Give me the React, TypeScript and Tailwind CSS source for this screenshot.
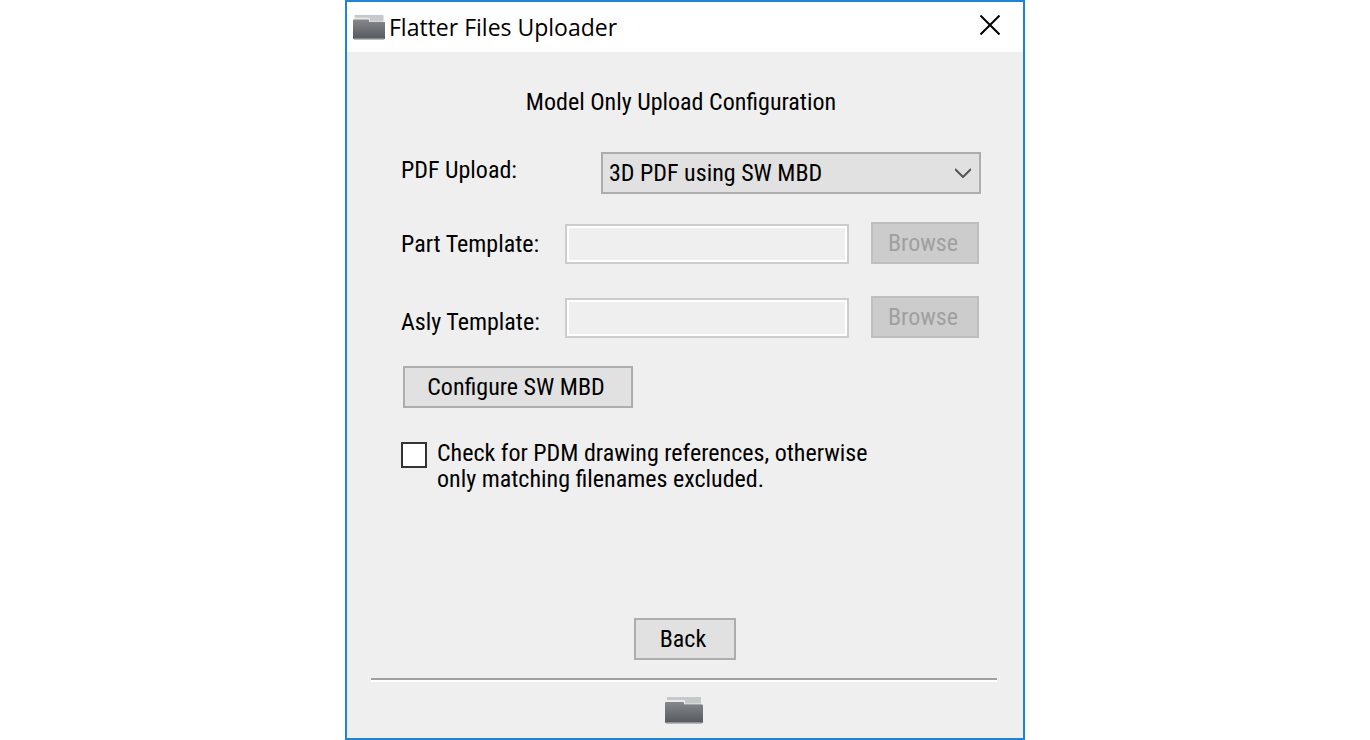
import { useId } from "react";

const FolderIcon = ({ className }: { className?: string }) => {
  const id = useId();

  return (
    <svg viewBox="0 0 38 28" preserveAspectRatio="none" className={className} aria-hidden="true">
      <defs>
        <linearGradient id={id} x1="0" y1="0" x2="0" y2="1">
          <stop offset="0" stopColor="#85898d" />
          <stop offset="1" stopColor="#55595e" />
        </linearGradient>
      </defs>
      <path d="M2 1h34v8H2z" fill="#c6c8c9" />
      <path d="M2 4h18v2h16v2H2z" fill="#e9eaea" />
      <path d="M20 2.5h16v5H20z" fill="#c6c8c9" />
      <path d="M1 6h17q1 0 1 1v1.5h18q1 0 1 1V26q0 1-1 1H1q-1 0-1-1V7q0-1 1-1z" fill={`url(#${id})`} />
      <path d="M1 27h36" stroke="#a3a5a8" strokeWidth="1.5" />
    </svg>
  );
};

const templates = [
  { id: "part-template", label: "Part Template:" },
  { id: "asly-template", label: "Asly Template:" },
];

const App = () => {
  return (
    <main className="flex min-h-screen justify-center bg-white">
      <section className="flex w-full max-w-170 flex-col border-2 border-[#1f83d6] bg-[#efefef] font-['Roboto_Condensed','Liberation_Sans',sans-serif] text-[24px] leading-[26px] text-black">
        <header className="flex h-12.5 items-center bg-white pr-5 pl-1.5">
          <FolderIcon className="h-6.5 w-8" />
          <h1 className="ml-1 flex-1 font-['Open_Sans',sans-serif] text-[23px] leading-8">Flatter Files Uploader</h1>
          <button type="button" aria-label="Close" className="mb-1 flex size-6.5 items-center justify-center">
            <svg viewBox="0 0 20 20" className="size-5" fill="none" stroke="#000" strokeWidth="2" aria-hidden="true">
              <path d="M0.5 0.5l19 19M19.5 0.5l-19 19" />
            </svg>
          </button>
        </header>

        <form className="flex flex-1 flex-col pt-9">
          <h2 className="pr-2 text-center leading-7">Model Only Upload Configuration</h2>

          <div className="mt-9 flex flex-col pr-10.5 pl-13.5">
            <div className="flex items-start justify-between">
              <label htmlFor="pdf-upload" className="leading-9">
                PDF Upload:
              </label>
              <div className="relative w-95">
                <select
                  id="pdf-upload"
                  className="h-10.5 w-full appearance-none border-2 border-[#adadad] bg-[#e1e1e1] pr-10 pl-1.5"
                >
                  <option>3D PDF using SW MBD</option>
                </select>
                <svg
                  viewBox="0 0 16 10"
                  className="pointer-events-none absolute top-4 right-2.5 h-2.5 w-4"
                  fill="none"
                  stroke="#555"
                  strokeWidth="2"
                  aria-hidden="true"
                >
                  <path d="M0 1l8 8 8-8" />
                </svg>
              </div>
            </div>

            <div className="mt-7 flex pr-0.5">
              <div className="flex w-41 shrink-0 flex-col gap-9.5 pt-0.5">
                {templates.map(({ id, label }) => (
                  <label key={id} htmlFor={id} className="leading-10">
                    {label}
                  </label>
                ))}
              </div>
              <div className="flex min-w-0 flex-1 flex-col gap-8">
                {templates.map(({ id }) => (
                  <div key={id} className="flex items-end gap-5.5">
                    <input
                      id={id}
                      type="text"
                      disabled
                      className="h-10 min-w-0 flex-1 border-2 border-[#cccccc] bg-[#efefef] px-2 shadow-[inset_0_0_0_2px_#ffffff]"
                    />
                    <button
                      type="button"
                      disabled
                      className="h-10.5 w-27 shrink-0 border-2 border-[#bfbfbf] bg-[#cccccc] pr-1 text-[#a0a0a0]"
                    >
                      Browse
                    </button>
                  </div>
                ))}
              </div>
            </div>

            <button
              type="button"
              className="mt-6 ml-0.5 h-10.5 w-57.5 border-2 border-[#adadad] bg-[#e1e1e1] pr-1"
            >
              Configure SW MBD
            </button>

            <div className="mt-8 flex items-start">
              <input
                id="check-references"
                type="checkbox"
                className="mt-0.5 size-6.5 shrink-0 appearance-none border-2 border-[#333333] bg-white checked:bg-[#333333]"
              />
              <label htmlFor="check-references" className="ml-2.5">
                Check for PDM drawing references, otherwise
                <br />
                only matching filenames excluded.
              </label>
            </div>
          </div>

          <button
            type="button"
            className="mx-auto mt-auto h-10.5 w-25.5 border-2 border-[#adadad] bg-[#e1e1e1] pr-1"
          >
            Back
          </button>
          <hr className="mt-4.5 mr-6.5 ml-6 h-1 border-t-2 border-b-2 border-t-[#a0a0a0] border-b-white" />
          <footer className="flex h-14 justify-center pt-3.5 pr-0.5">
            <FolderIcon className="h-7 w-9.5" />
          </footer>
        </form>
      </section>
    </main>
  );
};

export default App;
